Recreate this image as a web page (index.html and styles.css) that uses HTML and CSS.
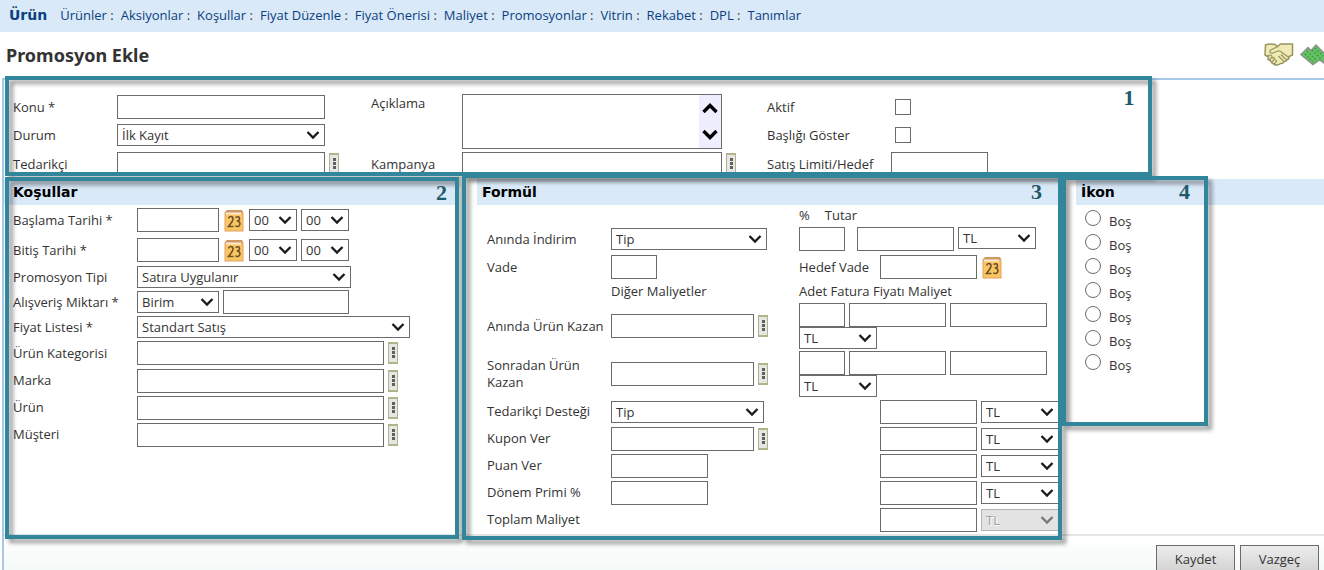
FILE: index.html
```html
<!DOCTYPE html>
<html lang="tr">
<head>
<meta charset="utf-8">
<title>Promosyon Ekle</title>
<link rel="stylesheet" href="styles.css">
</head>
<body>
<svg class="defs" aria-hidden="true">
  <symbol id="cal" viewBox="0 0 20 23">
    <path d="M3 1h15l1 2v2H1V3z" fill="#cf9763"/>
    <rect x="1" y="4" width="18" height="18" fill="#fdc55f" stroke="#dda468"/>
    <path d="M2 4.500h15" stroke="#fbe9d3" stroke-width="2"/>
    <path d="M4.500 9.500Q5 7.500 6.800 7.500Q9 7.500 9 10Q9 12 4.500 17.500H9.500M11.500 8.500Q15.500 6.500 15.500 9.800Q15.500 12 12.800 12Q16 12 16 15Q15.500 18.500 11.300 17" fill="none" stroke="#6b5330" stroke-width="1.600"/>
  </symbol>
</svg>

<nav class="nav">
  <a class="nav-title" href="#">Ürün</a>
  <ul class="nav-list">
    <li><a href="#">Ürünler</a></li>
    <li><a href="#">Aksiyonlar</a></li>
    <li><a href="#">Koşullar</a></li>
    <li><a href="#">Fiyat Düzenle</a></li>
    <li><a href="#">Fiyat Önerisi</a></li>
    <li><a href="#">Maliyet</a></li>
    <li><a href="#">Promosyonlar</a></li>
    <li><a href="#">Vitrin</a></li>
    <li><a href="#">Rekabet</a></li>
    <li><a href="#">DPL</a></li>
    <li><a href="#">Tanımlar</a></li>
  </ul>
</nav>

<header class="head">
  <h1>Promosyon Ekle</h1>
  <div class="head-icons">
    <button type="button" class="icon-btn" aria-label="Anlaşma">
      <svg width="30" height="24" viewBox="0 0 30 24">
        <path d="M1.500 2Q5 .5 11 1.500l2.500 2 3-2.500h12v11l-3.500 1.500q.5 3-2 3-.5 2.500-3 2-1 2.500-3.500 2-3 2.500-6 1l-3-2-1-2-2.500-1 .5-2.500-3.500-2z" fill="#f0ebb4" stroke="#99945e" stroke-width="1.500"/>
        <path d="M13.500 3.500 6 7.500q-1 3 3 2.500l5-2q2-.5 4 1.500l7 5M14.500 13l5 5M17 11.500l5 5M3 13l3-1q2 0 2 2l-2.500 3M8 15q3-1 2.500 1L8 19M11 17q2 0 1 2l-2 2" fill="none" stroke="#99945e" stroke-width="1.200"/>
      </svg>
    </button>
    <button type="button" class="icon-btn" aria-label="Para">
      <svg width="24" height="24" viewBox="0 0 24 24">
        <path d="M1 11.500 8 4.500l3 3 5-5.500 13 13-5 5-4.500-3-6.500 4.500z" fill="#62c262" stroke="#8b938b" stroke-width="1.500"/>
        <path d="M5 11l8 8M7 8l9 9M12 7l10 10M15 5l8 8" stroke="#3f8a45" stroke-width="1.200" stroke-dasharray="1.500 2"/>
      </svg>
    </button>
  </div>
</header>

<form class="panel">
  <section class="general">
    <div class="general-grid">
      <label for="konu">Konu *</label>
      <div class="field"><input id="konu" class="w-main" type="text"></div>
      <label for="aciklama">Açıklama</label>
      <div class="field memo">
        <textarea id="aciklama"></textarea>
        <div class="scroll" aria-hidden="true">
          <svg width="16" height="12" viewBox="0 0 16 12"><path d="M1.500 10 8 3.500l6.500 6.500" fill="none" stroke="#000" stroke-width="3.400"/></svg>
          <svg width="16" height="12" viewBox="0 0 16 12"><path d="M1.500 2 8 8.500 14.500 2" fill="none" stroke="#000" stroke-width="3.400"/></svg>
        </div>
      </div>
      <label for="aktif">Aktif</label>
      <div class="field"><input id="aktif" type="checkbox"></div>

      <label for="durum">Durum</label>
      <div class="field"><select id="durum" class="w-main"><option>İlk Kayıt</option></select></div>
      <label for="baslik">Başlığı Göster</label>
      <div class="field"><input id="baslik" type="checkbox"></div>

      <label for="tedarikci">Tedarikçi</label>
      <div class="field"><input id="tedarikci" class="w-main" type="text"><button type="button" class="pick" aria-label="Tedarikçi seç"></button></div>
      <label for="kampanya">Kampanya</label>
      <div class="field"><input id="kampanya" class="w-memo" type="text"><button type="button" class="pick" aria-label="Kampanya seç"></button></div>
      <label for="limit">Satış Limiti/Hedef</label>
      <div class="field"><input id="limit" class="w-m" type="text"></div>
    </div>
    <div class="frame"><span>1</span></div>
  </section>

  <div class="columns">
    <section class="col terms">
      <h2>Koşullar</h2>
      <div class="terms-grid">
        <label for="basla">Başlama Tarihi *</label>
        <div class="field"><input id="basla" class="w-date" type="text"><button type="button" class="cal" aria-label="Takvim"><svg><use href="#cal"/></svg></button><select class="w-hour" aria-label="Saat"><option>00</option></select><select class="w-hour" aria-label="Dakika"><option>00</option></select></div>
        <label for="bitis">Bitiş Tarihi *</label>
        <div class="field"><input id="bitis" class="w-date" type="text"><button type="button" class="cal" aria-label="Takvim"><svg><use href="#cal"/></svg></button><select class="w-hour" aria-label="Saat"><option>00</option></select><select class="w-hour" aria-label="Dakika"><option>00</option></select></div>
        <label for="tip">Promosyon Tipi</label>
        <div class="field"><select id="tip" class="w-type"><option>Satıra Uygulanır</option></select></div>
        <label for="miktar">Alışveriş Miktarı *</label>
        <div class="field"><select class="w-date" aria-label="Birim"><option>Birim</option></select><input id="miktar" class="w-qty" type="text"></div>
        <label for="liste">Fiyat Listesi *</label>
        <div class="field"><select id="liste" class="w-list"><option>Standart Satış</option></select></div>
        <label for="kategori">Ürün Kategorisi</label>
        <div class="field"><input id="kategori" class="w-term" type="text"><button type="button" class="pick" aria-label="Kategori seç"></button></div>
        <label for="marka">Marka</label>
        <div class="field"><input id="marka" class="w-term" type="text"><button type="button" class="pick" aria-label="Marka seç"></button></div>
        <label for="urun">Ürün</label>
        <div class="field"><input id="urun" class="w-term" type="text"><button type="button" class="pick" aria-label="Ürün seç"></button></div>
        <label for="musteri">Müşteri</label>
        <div class="field"><input id="musteri" class="w-term" type="text"><button type="button" class="pick" aria-label="Müşteri seç"></button></div>
      </div>
      <div class="frame"><span>2</span></div>
    </section>

    <section class="col formula">
      <h2>Formül</h2>
      <div class="formula-grid">
        <label class="low" for="indirim">Anında İndirim</label>
        <div class="field low"><select id="indirim" class="w-tip"><option>Tip</option></select></div>
        <div class="stack low">
          <div class="heads"><span>%</span><span>Tutar</span></div>
          <div class="field top"><input class="w-s after" type="text" aria-label="Yüzde"><input class="w-m" type="text" aria-label="Tutar"><select class="w-cur" aria-label="Para birimi"><option>TL</option></select></div>
        </div>

        <label for="vade">Vade</label>
        <div class="field"><input id="vade" class="w-s" type="text"></div>
        <div class="field target"><label for="hedef">Hedef Vade</label><input id="hedef" class="w-m" type="text"><button type="button" class="cal" aria-label="Takvim"><svg><use href="#cal"/></svg></button></div>

        <span></span>
        <span>Diğer Maliyetler</span>
        <span>Adet Fatura Fiyatı Maliyet</span>

        <label for="aninda">Anında Ürün Kazan</label>
        <div class="field"><input id="aninda" class="w-prod" type="text"><button type="button" class="pick" aria-label="Ürün seç"></button></div>
        <div class="stack">
          <div class="field"><input class="w-s" type="text" aria-label="Adet"><input class="w-m" type="text" aria-label="Fatura Fiyatı"><input class="w-m" type="text" aria-label="Maliyet"></div>
          <select class="w-cur" aria-label="Para birimi"><option>TL</option></select>
        </div>

        <label for="sonra">Sonradan Ürün Kazan</label>
        <div class="field"><input id="sonra" class="w-prod" type="text"><button type="button" class="pick" aria-label="Ürün seç"></button></div>
        <div class="stack">
          <div class="field"><input class="w-s" type="text" aria-label="Adet"><input class="w-m" type="text" aria-label="Fatura Fiyatı"><input class="w-m" type="text" aria-label="Maliyet"></div>
          <select class="w-cur" aria-label="Para birimi"><option>TL</option></select>
        </div>

        <label for="destek">Tedarikçi Desteği</label>
        <div class="field"><select id="destek" class="w-tip2"><option>Tip</option></select></div>
        <div class="field cost"><input class="w-m" type="text" aria-label="Maliyet"><select class="w-cur" aria-label="Para birimi"><option>TL</option></select></div>

        <label for="kupon">Kupon Ver</label>
        <div class="field"><input id="kupon" class="w-prod" type="text"><button type="button" class="pick" aria-label="Kupon seç"></button></div>
        <div class="field cost"><input class="w-m" type="text" aria-label="Maliyet"><select class="w-cur" aria-label="Para birimi"><option>TL</option></select></div>

        <label for="puan">Puan Ver</label>
        <div class="field"><input id="puan" class="w-m" type="text"></div>
        <div class="field cost"><input class="w-m" type="text" aria-label="Maliyet"><select class="w-cur" aria-label="Para birimi"><option>TL</option></select></div>

        <label for="prim">Dönem Primi %</label>
        <div class="field"><input id="prim" class="w-m" type="text"></div>
        <div class="field cost"><input class="w-m" type="text" aria-label="Maliyet"><select class="w-cur" aria-label="Para birimi"><option>TL</option></select></div>

        <label for="toplam">Toplam Maliyet</label>
        <span></span>
        <div class="field cost"><input id="toplam" class="w-m" type="text"><select class="w-cur" aria-label="Para birimi" disabled><option>TL</option></select></div>
      </div>
      <div class="frame"><span>3</span></div>
    </section>

    <section class="col icons">
      <h2>İkon</h2>
      <div class="radios">
        <label><input type="radio" name="ikon"><span>Boş</span></label>
        <label><input type="radio" name="ikon"><span>Boş</span></label>
        <label><input type="radio" name="ikon"><span>Boş</span></label>
        <label><input type="radio" name="ikon"><span>Boş</span></label>
        <label><input type="radio" name="ikon"><span>Boş</span></label>
        <label><input type="radio" name="ikon"><span>Boş</span></label>
        <label><input type="radio" name="ikon"><span>Boş</span></label>
      </div>
      <div class="frame"><span>4</span></div>
    </section>
  </div>

  <footer class="actions">
    <button type="submit">Kaydet</button>
    <button type="button">Vazgeç</button>
  </footer>
</form>
</body>
</html>
```
FILE: styles.css
```css
* { box-sizing: border-box; }

body {
  margin: 0;
  height: 100vh;
  display: flex;
  flex-direction: column;
  overflow: hidden;
  background: #fff;
  color: #333;
  font: 13px/17px "Open Sans", "Noto Sans", sans-serif;
}

input, select, textarea, button {
  margin: 0;
  font: inherit;
  color: inherit;
  border-radius: 0;
}

.defs { position: absolute; width: 0; height: 0; }

/* Navigation */
.nav {
  flex: none;
  display: flex;
  align-items: center;
  gap: 13px;
  height: 32px;
  padding: 0 9px 2px;
  background: #dae9f8;
}
.nav a { color: #0b4080; text-decoration: none; }
.nav .nav-title { font: bold 14px/17px "DejaVu Sans", sans-serif; }
.nav-list { display: flex; gap: 7px; margin: 0; padding: 0; list-style: none; }
.nav-list li:not(:last-child)::after { content: " :"; }

/* Page title */
.head {
  flex: none;
  display: flex;
  align-items: center;
  justify-content: space-between;
  height: 46px;
  padding-left: 6px;
  overflow: hidden;
}
h1 { margin: 0; font: bold 18px/24px "Noto Sans", sans-serif; }
.head-icons { display: flex; gap: 6px; }
.icon-btn { padding: 0; border: 0; background: none; }
.icon-btn svg { display: block; }

/* Form controls */
input[type="text"], textarea, select {
  border: 1px solid #6b6b6b;
  background-color: #fff;
  outline: 0;
}
input[type="text"] { height: 24px; padding: 0 4px; }
select {
  height: 22px;
  padding: 0 20px 0 4px;
  line-height: 18px;
  appearance: none;
  background-image: url("data:image/svg+xml,%3Csvg xmlns='http://www.w3.org/2000/svg' width='14' height='10'%3E%3Cpath d='M1.500 2 7 7.500 12.500 2' fill='none' stroke='%231a1a1a' stroke-width='2.300'/%3E%3C/svg%3E");
  background-repeat: no-repeat;
  background-position: right 4px center;
}
select:disabled {
  border-color: #b5b5b5;
  background-color: #e3e3e3;
  background-image: url("data:image/svg+xml,%3Csvg xmlns='http://www.w3.org/2000/svg' width='14' height='10'%3E%3Cpath d='M1.500 2 7 7.500 12.500 2' fill='none' stroke='%23777' stroke-width='2.300'/%3E%3C/svg%3E");
  color: #a0a0a0;
  opacity: 1;
  text-shadow: 1px 1px #fff;
}
input[type="checkbox"], input[type="radio"] {
  width: 16px;
  height: 16px;
  appearance: none;
  border: 1px solid #6b6b6b;
  background: #fff;
}
input[type="radio"] { border-radius: 50%; }

.pick {
  width: 10px;
  height: 22px;
  padding: 0;
  border: 1px solid #b3b38a;
  border-width: 2px 1px;
  background: url("data:image/svg+xml,%3Csvg xmlns='http://www.w3.org/2000/svg' width='8' height='18'%3E%3Cpath d='M3 3h3v3H3zM3 7h3v3H3zM3 11h3v3H3z' fill='%23606060'/%3E%3C/svg%3E") no-repeat #e6e6e6;
}
.cal { width: 20px; height: 23px; margin: 0 1px; padding: 0; border: 0; background: none; }
.cal svg { display: block; width: 20px; height: 23px; }

.field { display: flex; align-items: center; gap: 4px; }
.field.top { align-items: flex-start; }

.w-main { width: 208px; }
.w-memo { width: 260px; }
.w-date { width: 82px; }
.w-hour { width: 48px; }
.w-type { width: 214px; }
.w-qty { width: 126px; }
.w-list { width: 273px; }
.w-term { width: 247px; }
.w-tip { width: 156px; }
.w-tip2 { width: 153px; }
.w-prod { width: 143px; }
.w-s { width: 46px; }
.w-m { width: 97px; }
.w-cur { width: 78px; }

/* Panel */
.panel {
  flex: 1;
  display: flex;
  flex-direction: column;
  margin: 0 0 0 2px;
  border: solid #a8c8ea;
  border-width: 2px 0 0 2px;
}

/* Numbered callout drawn over a section */
.frame {
  position: absolute;
  inset: 0;
  z-index: 2;
  pointer-events: none;
}
.frame::before {
  content: "";
  position: absolute;
  inset: 0;
  border: 4px solid #31869b;
  filter: drop-shadow(4px 4px 2px rgba(0, 0, 0, 0.4));
}
.frame span {
  position: absolute;
  top: 4px;
  right: 12px;
  color: #215968;
  font: bold 22px/24px "Liberation Serif", serif;
}

/* General section */
.general {
  position: relative;
  flex: none;
  height: 96px;
  width: 87%;
}
.general-grid {
  display: grid;
  grid-template-columns: 104px 254px 91px 305px 124px 1fr;
  grid-template-rows: 28px 28px 30px;
  align-items: center;
  height: 96px;
  padding: 13px 0 0 9px;
  overflow: hidden;
}
.general .frame { inset: -4px 0 0 1px; }
.general .frame span { right: 18px; top: 10px; }
.memo {
  grid-row: span 2;
  align-self: start;
  gap: 0;
  width: 260px;
  height: 55px;
  margin-top: 1px;
  border: 1px solid #6b6b6b;
}
.memo textarea { flex: 1; height: 100%; border: 0; resize: none; }
.scroll {
  display: flex;
  flex-direction: column;
  align-items: center;
  justify-content: space-between;
  width: 22px;
  height: 100%;
  padding: 7px 0;
  background: #efeeff;
}
label[for="aciklama"] { grid-row: span 2; align-self: start; padding-top: 2px; }
.general input[type="checkbox"] { margin-left: 4px; }

/* Lower columns */
.columns {
  flex: none;
  display: grid;
  grid-template-columns: 458fr 600fr 262fr;
  padding-top: 3px;
}
.col { position: relative; min-height: 355px; }
h2 {
  margin: 0;
  height: 26px;
  padding-left: 5px;
  background: #dae9f8;
  color: #000;
  font: bold 14px/26px "DejaVu Sans", sans-serif;
}
.terms h2 { margin-right: 7px; padding-left: 9px; }
.terms .frame { inset: -2px 3px -5px 1px; }
.terms-grid {
  display: grid;
  grid-template-columns: 124px 1fr;
  grid-template-rows: 30px 30px 24px 26px 24px 28px repeat(3, 27px);
  align-items: center;
  padding-left: 9px;
}

.formula { padding-left: 15px; }
.formula .frame { inset: -5px 0 -6px 0; }
.formula .frame span { top: 6px; right: 20px; }
.formula-grid {
  display: grid;
  grid-template-columns: 124px 188px 1fr;
  grid-template-rows: 48px 28px 21px 48px 48px repeat(5, 27px);
  align-items: center;
  padding-left: 10px;
}
.formula-grid > .low { align-self: end; margin-bottom: 2px; }
.formula-grid > label.low { margin-bottom: 5px; }
.formula-grid > .field.low { margin-bottom: 3px; }
.stack { display: flex; flex-direction: column; align-items: flex-start; }
.heads { display: flex; gap: 15px; padding-bottom: 3px; }
.after { margin-right: 8px; }
.target label { width: 77px; }
.cost { margin-left: 81px; }

.icons { padding-left: 14px; }
.icons .frame { inset: -3px auto auto 0; width: 146px; height: 250px; }
.icons .frame span { right: 18px; }
.radios { display: flex; flex-direction: column; padding-left: 9px; }
.radios label { display: flex; align-items: flex-start; gap: 8px; height: 24px; padding-top: 5px; }
.radios span { padding-top: 3px; }

/* Footer */
.actions {
  flex: 1;
  display: flex;
  justify-content: flex-end;
  align-items: flex-start;
  gap: 5px;
  min-height: 0;
  padding: 9px 5px 0;
  border-top: 2px solid #e5e5e5;
  background: linear-gradient(#fff, #f3f9f8);
}
.actions button {
  width: 79px;
  height: 28px;
  padding: 0;
  border: 1px solid #6b6b6b;
  background: linear-gradient(#ededed, #d2d2d2);
}
```
